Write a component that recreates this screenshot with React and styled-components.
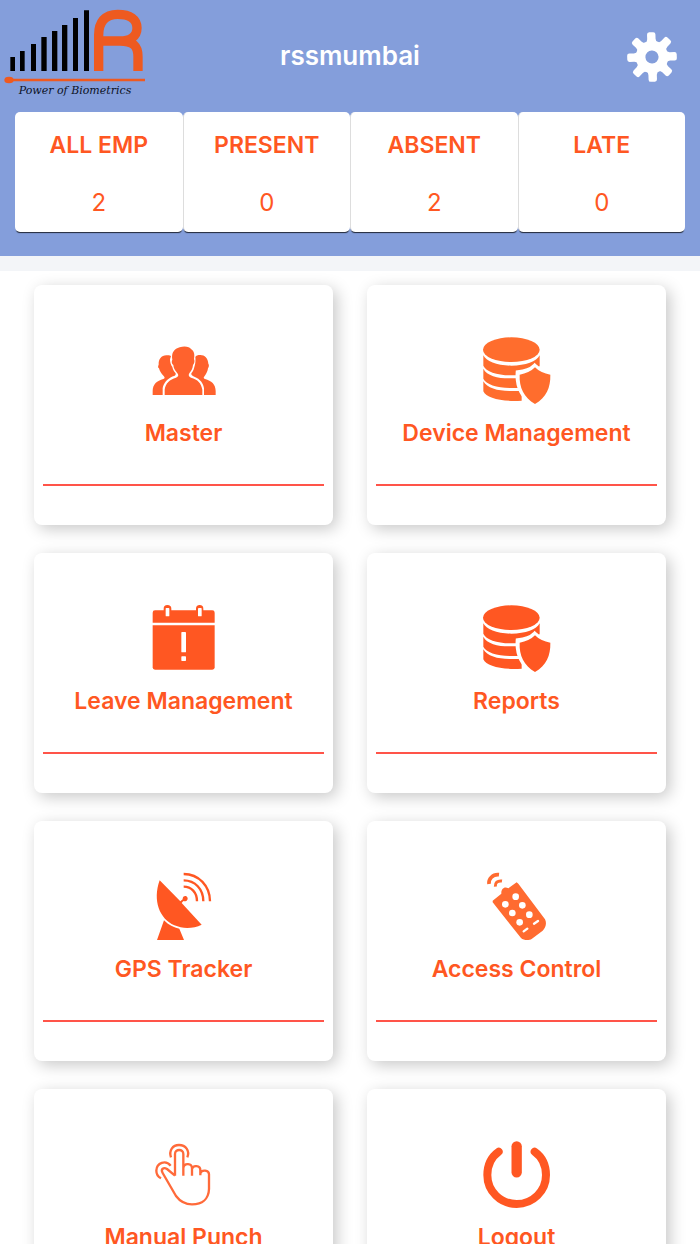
import React from "react";
import styled, { createGlobalStyle } from "styled-components";

const ORANGE = "#ff5722";

const GlobalStyle = createGlobalStyle`
  * {
    box-sizing: border-box;
  }

  body {
    margin: 0;
    background: #ffffff;
    font-family: Inter, Roboto, sans-serif;
  }
`;

const Page = styled.div`
  display: flex;
  flex-direction: column;
  height: 100vh;
`;

const Header = styled.header`
  flex: none;
  background: #849edb;
  border-bottom: 15px solid #f3f5f8;
  padding-bottom: 24px;
`;

const TitleBar = styled.div`
  display: grid;
  grid-template-columns: 1fr auto 1fr;
  align-items: center;
  height: 112px;
`;

const Logo = styled.div`
  width: 150px;
`;

const LogoMark = styled.svg`
  display: block;
  width: 150px;
  height: 84px;
`;

const LogoCaption = styled.div`
  font-family: "DejaVu Serif", serif;
  font-style: italic;
  font-size: 11px;
  line-height: 14px;
  text-align: center;
  white-space: nowrap;
  color: #0c1226;
  padding-bottom: 14px;
`;

const Title = styled.h1`
  margin: 0;
  font-size: 26px;
  font-weight: 600;
  line-height: 32px;
  color: #ffffff;
`;

const SettingsButton = styled.button`
  justify-self: end;
  width: 52px;
  height: 52px;
  margin-right: 22px;
  padding: 0;
  border: 0;
  background: none;
  cursor: pointer;

  svg {
    display: block;
  }
`;

const Stats = styled.dl`
  display: grid;
  grid-template-columns: repeat(4, 1fr);
  margin: 0 15px;
`;

const Stat = styled.div`
  height: 120px;
  padding-top: 19px;
  border-radius: 5px;
  background: #ffffff;
  box-shadow: 0 2px 1px -1px rgba(0, 0, 0, 0.75);
  text-align: center;
  color: ${ORANGE};

  & + & {
    border-left: 1px solid #dddddd;
  }
`;

const StatName = styled.dt`
  font-size: 23px;
  font-weight: 600;
  line-height: 28px;
`;

const StatValue = styled.dd`
  margin: 30px 0 0;
  font-size: 24px;
  line-height: 28px;
`;

const Menu = styled.main`
  flex: 1;
  min-height: 0;
  overflow-y: auto;
  scrollbar-width: none;
  display: grid;
  grid-template-columns: 1fr 1fr;
  grid-auto-rows: 240px;
  gap: 28px 34px;
  padding: 14px 34px 28px;
`;

const Card = styled.a`
  display: flex;
  flex-direction: column;
  align-items: center;
  padding: 49px 9px 0;
  border-radius: 8px;
  background: #ffffff;
  box-shadow: 4px 4px 16px rgba(0, 0, 0, 0.22);
  color: ${ORANGE};
  text-decoration: none;
`;

const CardIcon = styled.svg`
  width: 72px;
  height: 72px;
`;

const CardLabel = styled.span`
  margin-top: 13px;
  font-size: 23px;
  font-weight: 600;
  line-height: 28px;
  white-space: nowrap;
`;

const CardRule = styled.span`
  align-self: stretch;
  height: 2px;
  margin-top: 37px;
  background: #ff5449;
`;

const Gear = () => (
  <svg width="52" height="52" viewBox="-26 -27 52 52" aria-hidden="true">
    <g transform="rotate(-2)">
      <circle r="11.4" fill="none" stroke="#ffffff" strokeWidth="9.6" />
      {[0, 45, 90, 135, 180, 225, 270, 315].map((angle) => (
        <path
          key={angle}
          d="M-6.5 -13.5Q-4.2 -15.5 -4.2 -18V-22.5Q-4.2 -24.8 -2 -24.8H2Q4.2 -24.8 4.2 -22.5V-18Q4.2 -15.5 6.5 -13.5Z"
          fill="#ffffff"
          transform={`rotate(${angle})`}
        />
      ))}
    </g>
  </svg>
);

const Users = () => (
  <CardIcon viewBox="55 27 216 216" fill="#ff622d" aria-hidden="true">
    <path d="M69 210V198C69 178 82 167 101 162C106 160 106 157 102 153C94 145 90 138 88 130C84 128 85 122 87 119C86 102 95 92 110 91C117 90 121 91 124 93L121 103C121 110 123 120 128 126C130 137 135 141 138 145C139 150 136 153 130 154C113 161 101 176 99 190V210Z" />
    <path d="M258 210V198C258 178 245 167 226 162C221 160 221 157 225 153C231 145 234 138 235 130C239 124 238 118 236 116C235 99 225 90 212 90C204 90 199 92 197 96C198 105 198 115 194 126C192 137 188 140 185 145C184 150 188 153 194 155C212 162 221 175 223 190V210Z" />
    <path
      d="M105 210V194C107 175 121 163 139 158C147 155 148 149 142 143C135 135 132 130 131 120C126 116 125 109 128 104C124 84 134 71 150 67C166 61 180 66 184 72C195 79 195 91 193 102C196 109 194 116 190 120C189 131 185 138 180 143C175 149 177 155 184 158C204 163 215 175 218 194V210Z"
    />
  </CardIcon>
);

const Database = ({ color }) => (
  <CardIcon viewBox="64 27 216 216" fill={color} aria-hidden="true">
    <ellipse cx="155" cy="74" rx="85" ry="37" />
    <path d="M71 91C79 109 113 122 155 122C198 122 231 109 240 91V122C231 143 198 151 155 151C113 151 79 140 71 122Z" />
    <path d="M71 131C82 153 117 161 155 160H240V180C225 188 195 190 155 189C113 189 79 178 71 161Z" />
    <path d="M71 169C82 190 117 199 155 198H186V227C125 231 80 219 71 199Z" />
    <path
      d="M225 122C213 134 195 140 174 142C171 181 186 217 225 242C266 217 280 181 277 142C256 140 237 134 225 122Z"
      fill="#ffffff"
      stroke="#ffffff"
      strokeWidth="12"
    />
    <path d="M226 127C214 139 199 146 180 149C178 187 193 218 226 237C260 218 273 187 272 149C253 146 238 139 226 127Z" />
  </CardIcon>
);

const Calendar = () => (
  <CardIcon viewBox="55 33 216 216" fill={ORANGE} aria-hidden="true">
    <path d="M69 95V65Q69 58 76 58H102V53Q102 42 113 42Q125 42 125 53V58H199V53Q199 42 210 42Q221 42 221 53V58H248Q255 58 255 65V95Z" />
    <path d="M69 103H255V229Q255 236 248 236H76Q69 236 69 229Z" />
    <g fill="#ffffff">
      <rect x="108" y="51" width="11" height="25" rx="2" />
      <rect x="205" y="51" width="11" height="25" rx="2" />
      <rect x="155" y="123" width="14" height="61" rx="2" />
      <rect x="155" y="196" width="14" height="14" rx="2" />
    </g>
  </CardIcon>
);

const Satellite = () => (
  <CardIcon viewBox="55 27 216 216" fill={ORANGE} aria-hidden="true">
    <path d="M90 58L152 121L159 115C158 107 164 104 169 105C175 108 176 115 171 119C167 121 163 121 161 120L156 126L216 191C191 203 160 204 134 193C90 174 68 119 90 58Z" />
    <path d="M103 178C117 192 132 200 149 203L163 237H82Z" />
    <g fill="none" stroke={ORANGE} strokeWidth="7">
      <path d="M162 77C185 77 202 94 202 121" />
      <path d="M162 58C196 58 221 84 221 121" />
      <path d="M162 39C207 39 241 75 241 121" />
    </g>
  </CardIcon>
);

const Remote = () => (
  <CardIcon viewBox="64 27 216 216" fill="#ff6b30" aria-hidden="true">
    <path d="M99 119L125 98C124 85 133 75 146 82L171 64L176 68L256 175C262 187 258 201 249 209L217 233C207 240 192 238 184 231L99 124Z" />
    <g fill="none" stroke="#ff6b30" strokeWidth="9">
      <path d="M88 69C86 54 99 39 118 41" strokeWidth="11" />
      <path d="M107 77C106 66 113 58 127 60" />
    </g>
    <g fill="#ffffff">
      <circle cx="168" cy="107" r="10" />
      <circle cx="137" cy="130" r="10" />
      <circle cx="188" cy="133" r="10" />
      <circle cx="158" cy="156" r="10" />
      <circle cx="209" cy="161" r="10" />
      <circle cx="180" cy="184" r="10" />
    </g>
    <path
      d="M192 211L203 203M223 188L235 180"
      stroke="#ffffff"
      strokeWidth="7"
      strokeLinecap="round"
    />
  </CardIcon>
);

const Hand = () => (
  <CardIcon
    viewBox="55 18 216 216"
    fill="none"
    stroke="#ff6a3a"
    strokeWidth="7"
    strokeLinejoin="round"
    aria-hidden="true"
  >
    <path d="M136 131V66C136 50 161 50 161 66V131M161 108C164 91 187 94 187 109V131M187 111C190 98 212 100 212 114V130M212 124C216 112 238 114 238 127V171C237 200 218 217 187 217C166 217 151 208 139 192L99 123C92 111 102 105 112 111L136 131" />
    <path d="M124 76C117 55 129 39 148 39C168 39 181 56 173 76M94 139C85 134 80 125 80 116C81 92 108 83 123 101" />
  </CardIcon>
);

const Power = () => (
  <CardIcon
    viewBox="64 18 216 216"
    fill="none"
    stroke={ORANGE}
    strokeLinecap="round"
    aria-hidden="true"
  >
    <path
      d="M117 59C96 74 83 99 83 129C83 177 122 216 171 216C220 216 259 177 259 129C259 99 246 74 225 59"
      strokeWidth="24"
    />
    <path d="M171 43V121" strokeWidth="31" />
  </CardIcon>
);

const stats = [
  ["ALL EMP", 2],
  ["PRESENT", 0],
  ["ABSENT", 2],
  ["LATE", 0],
];

const menuItems = [
  { label: "Master", icon: <Users /> },
  { label: "Device Management", icon: <Database color="#ff6d2d" /> },
  { label: "Leave Management", icon: <Calendar /> },
  { label: "Reports", icon: <Database color={ORANGE} /> },
  { label: "GPS Tracker", icon: <Satellite /> },
  { label: "Access Control", icon: <Remote /> },
  { label: "Manual Punch", icon: <Hand /> },
  { label: "Logout", icon: <Power /> },
];

const App = () => (
  <Page>
    <GlobalStyle />
    <Header>
      <TitleBar>
        <Logo>
          <LogoMark viewBox="0 0 450 252" aria-hidden="true">
            <path d="M31 171h14v42h-14zM60 153h14v60h-14zM93 132h15v81h-15zM124 111h16v102h-16zM156 93h16v120h-16zM186 75h16v138h-16zM219 54h15v159h-15zM252 31h15v182h-15z" />
            <g fill="none" stroke="#ee5a20">
              <path
                d="M296 213V105C296 67 314 43 353 43C391 43 411 58 411 84C411 109 391 123 360 123H296M360 123C399 123 414 137 414 170V213"
                strokeWidth="28"
              />
              <path d="M26 240H435" strokeWidth="7" />
            </g>
            <ellipse cx="27" cy="240" rx="14" ry="10" fill="#ee5a20" />
          </LogoMark>
          <LogoCaption>Power of Biometrics</LogoCaption>
        </Logo>
        <Title>rssmumbai</Title>
        <SettingsButton type="button" aria-label="Settings">
          <Gear />
        </SettingsButton>
      </TitleBar>
      <Stats>
        {stats.map(([name, value]) => (
          <Stat key={name}>
            <StatName>{name}</StatName>
            <StatValue>{value}</StatValue>
          </Stat>
        ))}
      </Stats>
    </Header>
    <Menu>
      {menuItems.map(({ label, icon }) => (
        <Card key={label} href="#">
          {icon}
          <CardLabel>{label}</CardLabel>
          <CardRule />
        </Card>
      ))}
    </Menu>
  </Page>
);

export default App;
